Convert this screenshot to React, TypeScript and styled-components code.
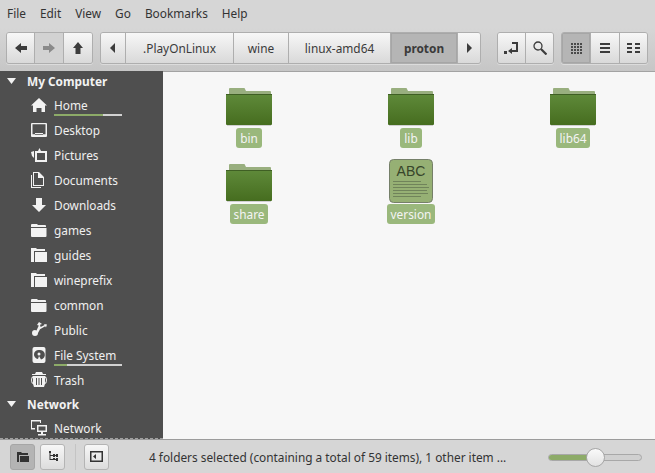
import React from "react";
import styled, { createGlobalStyle } from "styled-components";

const Global = createGlobalStyle`
  html, body { margin: 0; padding: 0; width: 655px; height: 473px; overflow: hidden; }
  body { font-family: "Noto Sans", "Open Sans", sans-serif; font-size: 11.85px; color: #303030; }
  * { box-sizing: border-box; }
`;

const Win = styled.div`
  width: 655px; height: 473px; display: flex; flex-direction: column;
  background: #d6d6d6; overflow: hidden;
`;
const MenuBar = styled.div`
  height: 28px; display: flex; align-items: center; padding: 0 7px 2px; gap: 14px;
  background: #d6d6d6; flex: none;
`;
const MenuItem = styled.span`font-size: 11.85px; color: #333; line-height: 26px;`;
const Toolbar = styled.div`
  height: 43px; flex: none; display: flex; align-items: flex-start; padding: 4px 7px 0 6px;
  background: linear-gradient(#d6d6d6, #c6c6c6);
`;
const Group = styled.div<{ $gap?: number }>`
  display: flex; height: 32px; border: 1px solid #aeaeae; border-radius: 3px; overflow: hidden;
  margin-right: ${(p) => p.$gap ?? 0}px; flex: none;
  box-shadow: 0 1px 0 rgba(255,255,255,.35);
`;
const Btn = styled.div<{ $w: number; $active?: boolean; $dim?: boolean; $bold?: boolean }>`
  width: ${(p) => p.$w}px; display: flex; align-items: center; justify-content: center;
  background: ${(p) => p.$active ? "#b5b5b5" : p.$dim ? "#d2d2d2" : "linear-gradient(#f7f7f7, #d9d9d9)"};
  box-shadow: ${(p) => p.$active ? "inset 0 0 0 1px #a6a6a6" : "none"};
  border-right: 1px solid #aeaeae; font-size: 11.85px; color: #3a3a3a;
  font-weight: ${(p) => p.$bold ? 700 : 400};
  &:last-child { border-right: 0; }
`;
const Body = styled.div`flex: 1; display: flex; min-height: 0; border-bottom: 1px solid #9c9c9c;`;
const Sidebar = styled.div`
  width: 163px; flex: none; background: #4f4f4f; overflow: hidden; position: relative;
  border-bottom: 1px dashed #a0a0a0;
`;
const Head = styled.div`
  height: 23px; display: flex; align-items: center; color: #f2f2f2; font-weight: 700; font-size: 11.85px;
  padding-left: 6px; gap: 10px; margin-top: -2px;
`;
const NetHead = styled(Head)`margin-top: 0;`;
const Row = styled.div`
  height: 25px; display: flex; align-items: center; padding-left: 31px; color: #f0f0f0; font-size: 11.85px; gap: 7px; flex: none;
`;
const IconSlot = styled.span`width: 16px; height: 16px; flex: none; display: flex;`;
const LabelWrap = styled.span`position: relative; display: block; width: 68px; white-space: nowrap; line-height: 16px;`;
const Usage = styled.span`
  position: absolute; left: 0; right: 0; bottom: -3px; height: 2px; background: #d2d2d2; display: block;
`;
const UsageFill = styled.span`display: block; height: 2px; background: #8dab68;`;
const Main = styled.div`
  flex: 1; background: #f7f7f7; padding: 16px 0 0 5px; display: grid;
  grid-template-columns: repeat(3, 162px); grid-auto-rows: 76px; align-content: start;
  border-top: 1px solid #a3a3a3;
`;
const Item = styled.div`display: flex; flex-direction: column; align-items: center;`;
const ItemLabel = styled.span`
  background: #9ab87c; color: #f4f4f4; font-size: 11.85px; line-height: 20px; height: 20px; padding: 0 4px;
  border-radius: 3px; margin-top: 2px;
`;
const FileWrap = styled.div`margin: -5px 0 -1px; display: flex;`;
const Status = styled.div`
  height: 33px; flex: none; display: flex; align-items: center; padding: 0 13px 0 10px; background: #d6d6d6;
`;
const SBtn = styled.div<{ $active?: boolean }>`
  width: 25px; height: 26px; border-radius: 3px; border: 1px solid ${(p) => p.$active ? "#a6a6a6" : "#b4b4b4"};
  background: ${(p) => p.$active ? "#b4b4b4" : "linear-gradient(#f7f7f7, #dcdcdc)"};
  display: flex; align-items: center; justify-content: center; margin-right: 5px; flex: none;
`;
const Sep = styled.div`width: 1px; height: 26px; background: #c4c4c4; margin: 0 8px 0 5px; flex: none;`;
const StatusText = styled.div`margin-left: 35px; width: 399px; color: #333; font-size: 11.85px; white-space: nowrap; flex: none;`;
const Slider = styled.div`width: 94px; height: 7px; border: 1px solid #a8a8a8; border-radius: 4px; background: #d0d0d0; position: relative; flex: none; margin-top: 1px;`;
const SliderFill = styled.div`height: 5px; width: 42px; background: #8dab68; border-radius: 3px 0 0 3px;`;
const Knob = styled.div`
  position: absolute; left: 37px; top: -7px; width: 19px; height: 19px; border-radius: 50%;
  background: linear-gradient(#fafafa, #e2e2e2); border: 1px solid #a6a6a6;
`;

const S = ({ children, w = 16, h = 16, c = "#f2f2f2" }: { children: React.ReactNode; w?: number; h?: number; c?: string }) => (
  <svg width={w} height={h} viewBox={`0 0 ${w} ${h}`} fill={c}>{children}</svg>
);

const Tri = () => <svg width="11" height="8" viewBox="0 0 11 8" fill="#f2f2f2"><path d="M1 1h9L5.500 7z" /></svg>;

const ArrowL = ({ c = "#3c3c3c" }) => <S c={c} w={12} h={10}><path d="M0 5 6 0v3h6v4H6v3z" /></S>;
const ArrowR = ({ c = "#3c3c3c" }) => <S c={c} w={12} h={10}><path d="M12 5 6 0v3H0v4h6v3z" /></S>;
const ArrowU = () => <S c="#3c3c3c" w={10} h={12}><path d="M5 0l5 6H7.500v6h-5V6H0z" /></S>;

const FolderIcon = () => <S><path d="M0 3q0-1 1-1h5l1 1h7q1 0 1 1v1H0zM0 6h15.500v8q0 1-1 1H1q-1 0-1-1z" /></S>;
const FolderOpen = () => <S><path d="M0 1h5l1 1h8v2H3v11H0zM4 5h12v10H4z" /></S>;
const icons: Record<string, React.ReactNode> = {
  Home: <S><path d="M8 1 16 8.500h-2V15h-3.500v-4h-5v4H2V8.500H0z" /></S>,
  Desktop: <S><path fillRule="evenodd" d="M1 1h14a1 1 0 0 1 1 1v12a1 1 0 0 1-1 1H1a1 1 0 0 1-1-1V2a1 1 0 0 1 1-1zm.5 1.200v10h13v-10zM4 11h8v2H4z" /></S>,
  Pictures: <S><path fillRule="evenodd" d="M4 4h3l1.500-3L10 4h6v11H4zm2 2v7h8V6zM0 5l3-1v7L1 9z" /></S>,
  Documents: <S><path fillRule="evenodd" d="M2 0h6l5 5v9H2zm1 1v12h9V6H7V1zM0 3h1v12h9v1H0z" /></S>,
  Downloads: <S><path d="M5 1h6v7h4l-7 7-7-7h4z" /></S>,
  games: <FolderIcon />,
  common: <FolderIcon />,
  guides: <FolderOpen />,
  wineprefix: <FolderOpen />,
  Public: <S><path d="M8 0l3 2-2 .8.6 2.200 4-2L13 2l3 .5-1 3-.8-1.200-5.200 3L7 11a3 3 0 1 1-3-3l1.500.4 2.300-5L6 3z" /></S>,
  "File System": <S><path fillRule="evenodd" d="M3.500 0h9a2 2 0 0 1 2 2v12a2 2 0 0 1-2 2h-9a2 2 0 0 1-2-2V2a2 2 0 0 1 2-2zM8 3a4.500 4.500 0 0 0-1 9l1-3 2 3.500A4.500 4.500 0 0 0 8 3zm0 2.500a1.500 1.500 0 1 1 0 3 1.500 1.500 0 0 1 0-3z" /></S>,
  Trash: <S><path fillRule="evenodd" d="M5 0h6l1 2h3v1H1V2h3zM2 4h12q2 1 2 4t-2 4l-1 3H3l-1-3Q0 11 0 8t2-4zm0 1.500Q1 6 1 8t1 3zm12 0V11q1-1 1-3t-1-2.500zM5 6v7h1V6zm2.500 0v7h1V6zM10 6v7h1V6z" /></S>,
  Network: <S><path fillRule="evenodd" d="M0 0h10v3H9V1.500H1V8h3v1.500H0zM6 5h10v7h-4v2h3v1.500H7V14h3v-2H6zm1.500 1.500v4h7v-4z" /></S>,
};

const GridGlyph = () => (
  <S c="#4a4a4a" w={11} h={11}>
    {[0, 3, 6, 9].flatMap((y) => [0, 3, 6, 9].map((x) => <rect key={`${x}-${y}`} x={x} y={y} width="2" height="2" />))}
  </S>
);

const BigFolder = () => (
  <svg width="46" height="38" viewBox="0 0 46 38">
    <defs>
      <linearGradient id="fg" x1="0" y1="0" x2="0" y2="1"><stop offset="0" stopColor="#5f8a3a" /><stop offset="1" stopColor="#466d1f" /></linearGradient>
    </defs>
    <path d="M3 1q0-1 1-1h14q1 0 1 1l1 2h24q1 0 1 1v4H3z" fill="#99af7f" />
    <path d="M0 6h46v30q0 1-1 1H1q-1 0-1-1z" fill="url(#fg)" />
    <rect x="0" y="6" width="46" height="1" fill="#3f5f24" />
    <rect x="1" y="37" width="44" height="1" fill="#cfcfcf" />
  </svg>
);

const TextFile = () => (
  <svg width="44" height="44" viewBox="0 0 44 44">
    <rect x="0.500" y="0.500" width="43" height="43" rx="4" fill="#96b074" stroke="#757f69" />
    <text x="22" y="17" textAnchor="middle" fontFamily="Liberation Sans, sans-serif" fontSize="14" fill="#37452a">ABC</text>
    <g fill="#56664a">
      {[22, 25, 28, 31, 34, 37].map((y, i) => (
        <rect key={y} x="4" y={y} width={[28, 34, 36, 34, 35, 28][i]} height="1" opacity=".6" />
      ))}
    </g>
  </svg>
);

const rows = ["Home", "Desktop", "Pictures", "Documents", "Downloads", "games", "guides", "wineprefix", "common", "Public", "File System", "Trash"];
const usage: Record<string, number> = { Home: 72, "File System": 19 };

export default function App() {
  return (
    <Win>
      <Global />
      <MenuBar>
        {["File", "Edit", "View", "Go", "Bookmarks", "Help"].map((m) => <MenuItem key={m}>{m}</MenuItem>)}
      </MenuBar>
      <Toolbar>
        <Group $gap={7}>
          <Btn $w={28}><ArrowL /></Btn>
          <Btn $w={29} $dim><ArrowR c="#8a8a8a" /></Btn>
          <Btn $w={28}><ArrowU /></Btn>
        </Group>
        <Group $gap={16}>
          <Btn $w={25}><S c="#3c3c3c" w={6} h={10}><path d="M5 0v10L0 5z" /></S></Btn>
          <Btn $w={108}>.PlayOnLinux</Btn>
          <Btn $w={55}>wine</Btn>
          <Btn $w={102}>linux-amd64</Btn>
          <Btn $w={67} $active $bold>proton</Btn>
          <Btn $w={22}><S c="#3c3c3c" w={6} h={10}><path d="M1 0v10l5-5z" /></S></Btn>
        </Group>
        <Group $gap={7}>
          <Btn $w={28}>
            <S c="#3c3c3c" w={15} h={14}><path d="M8 1h6v10H8v2L4 10l4-3v2h4V3H8zM0 10h3v3H0z" /></S>
          </Btn>
          <Btn $w={27}>
            <svg width="14" height="14" viewBox="0 0 14 14" fill="none" stroke="#3c3c3c"><circle cx="5" cy="5" r="4" strokeWidth="1.300" /><path d="M8 8l5.500 5.500" strokeWidth="2.200" /></svg>
          </Btn>
        </Group>
        <Group>
          <Btn $w={29} $active><GridGlyph /></Btn>
          <Btn $w={29}><S c="#3c3c3c" w={10} h={10}><path d="M0 0h10v2H0zM0 4h10v2H0zM0 8h10v2H0z" /></S></Btn>
          <Btn $w={27}><S c="#3c3c3c" w={13} h={10}><path d="M0 0h5v2H0zM8 0h5v2H8zM0 4h5v2H0zM8 4h5v2H8zM0 8h5v2H0zM8 8h5v2H8z" /></S></Btn>
        </Group>
      </Toolbar>
      <Body>
        <Sidebar>
          <Head><Tri />My Computer</Head>
          {rows.map((r) => (
            <Row key={r}>
              <IconSlot>{icons[r]}</IconSlot>
              <LabelWrap>
                {r}
                {usage[r] !== undefined && (
                  <Usage><UsageFill style={{ width: `${usage[r]}%` }} /></Usage>
                )}
              </LabelWrap>
            </Row>
          ))}
          <NetHead><Tri />Network</NetHead>
          <Row>
            <IconSlot>{icons.Network}</IconSlot>
            <LabelWrap>Network</LabelWrap>
          </Row>
        </Sidebar>
        <Main>
          {["bin", "lib", "lib64", "share"].map((n) => (
            <Item key={n}><BigFolder /><ItemLabel>{n}</ItemLabel></Item>
          ))}
          <Item><FileWrap><TextFile /></FileWrap><ItemLabel>version</ItemLabel></Item>
        </Main>
      </Body>
      <Status>
        <SBtn $active><S c="#333" w={12} h={10}><path d="M0 0h4l1 1h6v2H2v7H0zM3 4h9v6H3z" /></S></SBtn>
        <SBtn><S c="#333" w={10} h={11}><path d="M1 0h2v2H2.500v2H5V3h2v1h1V3h2v3H8V5H7v1H5V5H2.500v3H5V7h2v1h1V7h2v3H8V9H5H1.500V2H1z" /></S></SBtn>
        <Sep />
        <SBtn><S c="#333" w={13} h={11}><path fillRule="evenodd" d="M0 0h13v11H0zm1.500 1.500v8h10v-8zM6 3v5L3 5.500z" /></S></SBtn>
        <StatusText>4 folders selected (containing a total of 59 items), 1 other item ...</StatusText>
        <Slider><SliderFill /><Knob /></Slider>
      </Status>
    </Win>
  );
}
